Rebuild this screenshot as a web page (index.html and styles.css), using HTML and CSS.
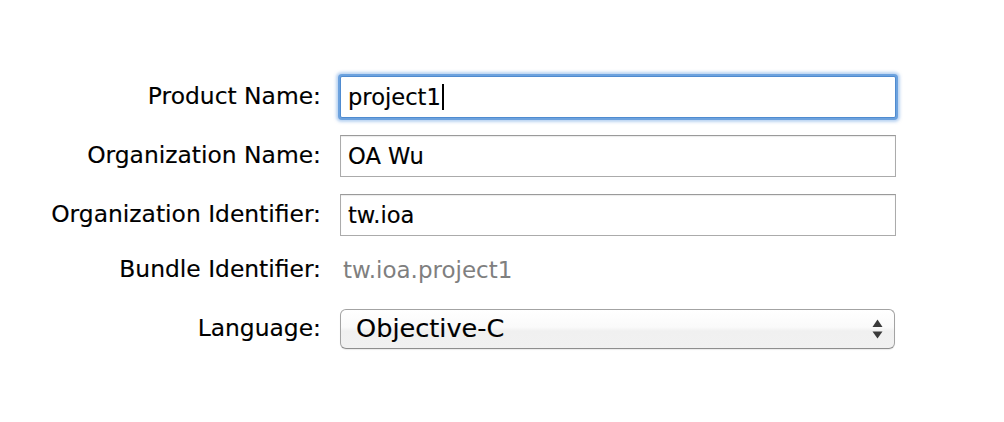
FILE: index.html
```html
<!DOCTYPE html>
<html>
<head>
<meta charset="utf-8">
<link rel="stylesheet" href="styles.css">
</head>
<body>
<div class="form">
  <div class="label">Product Name:</div>
  <div class="field focused"><span class="value">project1</span><span class="caret"></span></div>

  <div class="label">Organization Name:</div>
  <div class="field"><span class="value">OA Wu</span></div>

  <div class="label">Organization Identifier:</div>
  <div class="field"><span class="value">tw.ioa</span></div>

  <div class="label bundle">Bundle Identifier:</div>
  <div class="static bundle">tw.ioa.project1</div>

  <div class="label">Language:</div>
  <div class="popup">
    <span class="popup-text">Objective-C</span>
    <svg class="arrows" width="11" height="20" viewBox="0 0 11 20">
      <path d="M5.5 0.5 L10.5 8 L0.5 8 Z" fill="#3a3a3a"/>
      <path d="M5.5 19.5 L10.5 12.5 L0.5 12.5 Z" fill="#3a3a3a"/>
    </svg>
  </div>
</div>
</body>
</html>
```
FILE: styles.css
```css
html, body {
  margin: 0;
  padding: 0;
  background: #ffffff;
}
body {
  width: 1004px;
  height: 422px;
  overflow: hidden;
  font-family: "DejaVu Sans", "Noto Sans", sans-serif;
  color: #000;
}
.form {
  display: grid;
  grid-template-columns: 321px 556px;
  grid-template-rows: 42px 42px 42px 39px 40px;
  column-gap: 19px;
  row-gap: 17px;
  padding-top: 76px;
  align-items: center;
}
.label {
  text-align: right;
  font-size: 23.4px;
  line-height: 1;
  white-space: nowrap;
  -webkit-text-stroke: 0.15px #000;
}
.bundle {
  padding-bottom: 5px;
}
.field {
  box-sizing: border-box;
  height: 42px;
  border: 1px solid #ababab;
  border-top-color: #9a9a9a;
  box-shadow: inset 0 1px 1px rgba(0,0,0,0.08);
  background: #fff;
  display: flex;
  align-items: center;
  padding-left: 7px;
  font-size: 22.6px;
  -webkit-text-stroke: 0.15px #000;
}
.field.focused {
  border: 1px solid #4f8bd0;
  box-shadow: 0 0 0 2px rgba(100, 156, 220, 0.9), 0 0 3px 4px rgba(120, 170, 230, 0.5);
  border-radius: 2px;
}
.value {
  line-height: 1;
  white-space: nowrap;
}
.caret {
  display: inline-block;
  width: 2px;
  height: 26px;
  background: #000;
  margin-left: 1px;
}
.static {
  font-size: 23px;
  color: #7f7f7f;
  padding-left: 3px;
  line-height: 1;
  white-space: nowrap;
}
.popup {
  box-sizing: border-box;
  height: 40px;
  border: 1px solid #a3a3a3;
  border-bottom-color: #8e8e8e;
  border-radius: 6px;
  background: linear-gradient(#ffffff 0%, #fafafa 45%, #f0f0f0 55%, #f1f1f1 100%);
  box-shadow: 0 1px 1px rgba(0,0,0,0.08);
  display: flex;
  align-items: center;
  justify-content: space-between;
  padding-left: 15px;
  padding-right: 11px;
  width: 555px;
}
.popup-text {
  font-size: 25.6px;
  line-height: 1;
  white-space: nowrap;
  -webkit-text-stroke: 0.15px #000;
}
.arrows {
  display: block;
}
```
